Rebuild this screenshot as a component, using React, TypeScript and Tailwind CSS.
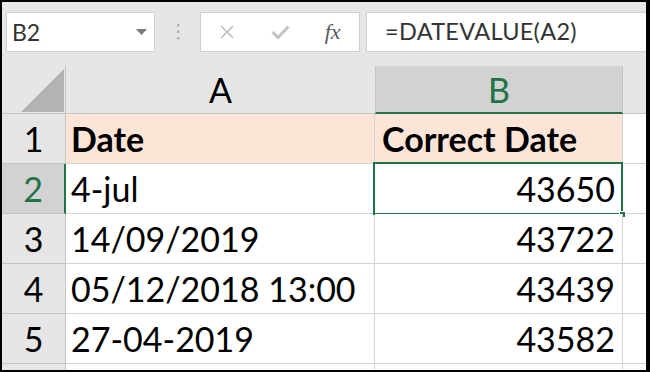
import React from "react";

const rows = [
  { n: "1", a: "Date", b: "Correct Date", header: true },
  { n: "2", a: "4-jul", b: "43650", selected: true },
  { n: "3", a: "14/09/2019", b: "43722" },
  { n: "4", a: "05/12/2018 13:00", b: "43439" },
  { n: "5", a: "27-04-2019", b: "43582" },
  { n: "", a: "", b: "" },
];

export default function App() {
  return (
    <div
      className="w-[650px] h-[372px] overflow-hidden bg-[#e6e6e6] border-t-2 border-l-2 border-r-4 border-b-2 border-black flex flex-col"
      style={{ fontFamily: "Lato, 'Open Sans', sans-serif" }}
    >
      {/* toolbar */}
      <div className="h-[64px] shrink-0 flex items-start pt-[10px] pl-[4px]">
        <div className="w-[149px] h-[40px] bg-white border border-[#cfcfcf] flex items-center justify-between pl-[5px] pr-[7px]">
          <span className="text-[23px] text-[#333] leading-none">B2</span>
          <svg width="11" height="6" viewBox="0 0 11 6">
            <polygon points="0,0 11,0 5.5,6" fill="#7a7a7a" />
          </svg>
        </div>
        <div className="w-[45px] h-[40px] flex items-center justify-center">
          <svg width="4" height="16" viewBox="0 0 4 16">
            <rect x="1" y="0" width="2.4" height="2.4" fill="#b0b0b0" />
            <rect x="1" y="6.5" width="2.4" height="2.4" fill="#b0b0b0" />
            <rect x="1" y="13" width="2.4" height="2.4" fill="#b0b0b0" />
          </svg>
        </div>
        <div className="w-[160px] h-[40px] bg-white border border-[#cfcfcf] flex items-center">
          <div className="flex-1 flex justify-center">
            <svg width="14" height="14" viewBox="0 0 14 14">
              <path d="M1 1 L13 13 M13 1 L1 13" stroke="#bdbdbd" strokeWidth="1.6" />
            </svg>
          </div>
          <div className="flex-1 flex justify-center">
            <svg width="19" height="14" viewBox="0 0 19 14">
              <path d="M1.5 7 L7 12.5 L17.5 1.5" stroke="#c4c4c4" strokeWidth="3" fill="none" />
            </svg>
          </div>
          <div className="flex-1 flex justify-center">
            <span
              className="italic text-[22px] text-[#5a5a5a] leading-none"
              style={{ fontFamily: "'Liberation Serif', 'DejaVu Serif', serif" }}
            >
              fx
            </span>
          </div>
        </div>
        <div className="ml-[6px] flex-1 h-[40px] bg-white border-y border-l border-[#cfcfcf] flex items-center pl-[18px]">
          <span className="text-[23.5px] text-[#333] leading-none tracking-[0.3px]">=DATEVALUE(A2)</span>
        </div>
      </div>

      {/* column headers */}
      <div className="h-[48px] shrink-0 flex">
        <div className="w-[64px] border-r border-b border-[#c4c4c4] flex items-end justify-end pb-[1px] pr-[1px]">
          <svg width="43" height="43" viewBox="0 0 43 43">
            <polygon points="0,43 43,0 43,43" fill="#b3b3b3" />
          </svg>
        </div>
        <div className="w-[309px] border-b border-[#c4c4c4] flex items-center justify-center text-[34px] text-black">
          A
        </div>
        <div className="w-[248px] bg-[#d2d2d2] border-b-2 border-l border-r border-l-[#c4c4c4] border-r-[#c4c4c4] border-b-[#217346] flex items-center justify-center text-[34px] text-[#217346]">
          B
        </div>
        <div className="flex-1 border-b border-[#c4c4c4]" />
      </div>

      {/* rows */}
      {rows.map((r, i) => (
        <div key={i} className="h-[50px] shrink-0 flex">
          <div
            className={
              r.selected
                ? "w-[64px] bg-[#d2d2d2] border-b border-[#c4c4c4] border-r-2 border-r-[#217346] flex items-center justify-center text-[34px] text-[#217346]"
                : "w-[64px] border-b border-r border-[#c4c4c4] flex items-center justify-center text-[34px] text-black"
            }
          >
            {r.n}
          </div>
          <div
            className={
              r.header
                ? "w-[309px] bg-[#fce4d6] border-b border-r border-[#d4d4d4] flex items-center pl-[5px] text-[34px] font-bold text-black"
                : "w-[309px] bg-white border-b border-r border-[#d4d4d4] flex items-center pl-[5px] text-[34px] text-black"
            }
          >
            {r.a}
          </div>
          <div
            className={
              r.header
                ? "relative w-[248px] bg-[#fce4d6] border-b border-r border-[#d4d4d4] flex items-center pl-[7px] text-[34px] font-bold text-black"
                : "relative w-[248px] bg-white border-b border-r border-[#d4d4d4] flex items-center justify-end pr-[7px] text-[34px] text-black"
            }
          >
            {r.b}
            {r.selected && (
              <>
                <div className="absolute -top-[2px] -left-[2px] -right-[1px] -bottom-[2px] border-2 border-[#217346]" />
                <div className="absolute -right-[4px] -bottom-[5px] w-[7px] h-[7px] bg-[#217346] border border-white" />
              </>
            )}
          </div>
          <div className="flex-1 bg-white border-b border-[#d4d4d4]" />
        </div>
      ))}
    </div>
  );
}
